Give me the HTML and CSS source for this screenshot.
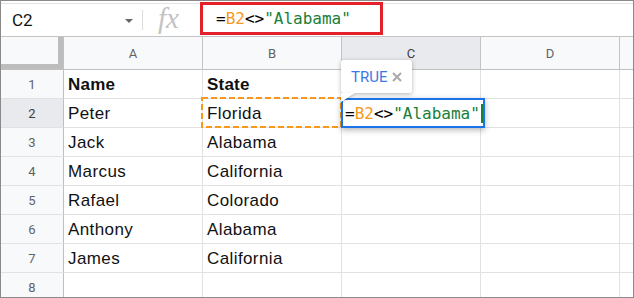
FILE: index.html
```html
<!DOCTYPE html>
<html lang="en">
<head>
    <meta charset="UTF-8">
    <title>Sheet - not equal formula</title>
    <link rel="stylesheet" href="styles.css">
</head>
<body>
    <div class="sheet">
        <div class="formula-bar">
            <div class="name-box">
                <span>C2</span>
                <span class="caret"></span>
            </div>
            <div class="divider"></div>
            <div class="fx">fx</div>
            <div class="formula-input">
                <span class="op">=</span><span class="ref">B2</span><span class="op">&lt;&gt;</span><span class="str">"Alabama"</span>
            </div>
        </div>

        <div class="grid">
            <div class="cell corner"></div>
            <div class="cell col-head">A</div>
            <div class="cell col-head">B</div>
            <div class="cell col-head active">C</div>
            <div class="cell col-head">D</div>
            <div class="cell col-head last"></div>

            <div class="cell row-head">1</div>
            <div class="cell bold">Name</div>
            <div class="cell bold">State</div>
            <div class="cell"></div>
            <div class="cell"></div>
            <div class="cell last"></div>

            <div class="cell row-head active">2</div>
            <div class="cell">Peter</div>
            <div class="cell copy-ref">
                Florida
                <svg class="dash-box" width="141" height="31">
                    <rect x="1" y="1" width="139" height="29" fill="none" stroke="#f7981d" stroke-width="2" stroke-dasharray="6 3"/>
                </svg>
            </div>
            <div class="cell editing">
                <div class="result-tip">
                    <span class="tip-value">TRUE</span>
                    <svg class="tip-close" width="10" height="10" viewBox="0 0 10 10">
                        <path d="M1 1 L9 9 M9 1 L1 9" stroke="#a9a9a9" stroke-width="2"/>
                    </svg>
                </div>
                <div class="cell-editor">
                    <span class="op">=</span><span class="ref">B2</span><span class="op">&lt;&gt;</span><span class="str">"Alabama"</span><span class="cursor"></span>
                </div>
            </div>
            <div class="cell"></div>
            <div class="cell last"></div>

            <div class="cell row-head">3</div>
            <div class="cell">Jack</div>
            <div class="cell">Alabama</div>
            <div class="cell"></div>
            <div class="cell"></div>
            <div class="cell last"></div>

            <div class="cell row-head">4</div>
            <div class="cell">Marcus</div>
            <div class="cell">California</div>
            <div class="cell"></div>
            <div class="cell"></div>
            <div class="cell last"></div>

            <div class="cell row-head">5</div>
            <div class="cell">Rafael</div>
            <div class="cell">Colorado</div>
            <div class="cell"></div>
            <div class="cell"></div>
            <div class="cell last"></div>

            <div class="cell row-head">6</div>
            <div class="cell">Anthony</div>
            <div class="cell">Alabama</div>
            <div class="cell"></div>
            <div class="cell"></div>
            <div class="cell last"></div>

            <div class="cell row-head">7</div>
            <div class="cell">James</div>
            <div class="cell">California</div>
            <div class="cell"></div>
            <div class="cell"></div>
            <div class="cell last"></div>

            <div class="cell row-head">8</div>
            <div class="cell"></div>
            <div class="cell"></div>
            <div class="cell"></div>
            <div class="cell"></div>
            <div class="cell last"></div>
        </div>
    </div>
</body>
</html>
```

FILE: styles.css
```css
body {
    margin: 0;
    background: #fff;
}

.sheet {
    width: 634px;
    height: 298px;
    box-sizing: border-box;
    border: 1px solid #8a8a8a;
    overflow: hidden;
    background: #fff;
    font-family: 'Liberation Sans', Arial, sans-serif;
}

/* formula bar */

.formula-bar {
    display: flex;
    align-items: center;
    height: 34px;
    margin-top: 2px;
    box-sizing: border-box;
    border-top: 1px solid #e3e3e3;
    border-bottom: 1px solid #c4c4c4;
}

.name-box {
    width: 140px;
    box-sizing: border-box;
    padding: 0 8px 0 11px;
    display: flex;
    align-items: center;
    justify-content: space-between;
    font-family: Roboto, sans-serif;
    font-size: 17px;
    color: #111;
}

.caret {
    width: 0;
    height: 0;
    border-left: 4px solid transparent;
    border-right: 4px solid transparent;
    border-top: 4px solid #666;
    margin-top: 2px;
}

.divider {
    width: 1px;
    height: 20px;
    margin-left: 1px;
    background: #dadce0;
}

.fx {
    width: 28px;
    margin-left: 15px;
    font-family: 'Liberation Serif', serif;
    font-style: italic;
    font-size: 29px;
    color: #c3c3c3;
    line-height: 1;
    margin-top: -4px;
}

.formula-input {
    align-self: flex-start;
    margin-top: -2px;
    margin-left: 14px;
    height: 33px;
    box-sizing: border-box;
    border: 3px solid #e3212b;
    padding: 0 29px 0 13px;
    display: flex;
    align-items: center;
    font-family: 'DejaVu Sans Mono', 'Liberation Mono', monospace;
    font-size: 16px;
    white-space: pre;
}

.op { color: #000; }
.ref { color: #f7981d; }
.str { color: #188038; }

/* grid */

.grid {
    display: grid;
    grid-template-columns: 63px 139px 139px 139px 139px 1fr;
    grid-template-rows: 33px repeat(8, 29px);
}

.cell {
    position: relative;
    box-sizing: border-box;
    border-right: 1px solid #e2e2e3;
    border-bottom: 1px solid #e2e2e3;
    padding: 2px 0 0 4px;
    display: flex;
    align-items: center;
    font-size: 17px;
    letter-spacing: 0.4px;
    color: #111;
    white-space: nowrap;
}

.cell.last {
    border-right: none;
}

.cell.bold {
    font-weight: bold;
    letter-spacing: 0.2px;
}

.col-head,
.row-head {
    justify-content: center;
    padding: 0;
    background: #f8f9fa;
    font-family: Roboto, sans-serif;
    font-size: 13px;
    letter-spacing: 0;
    color: #5f6368;
}

.col-head {
    border-right-color: #c4c4c4;
    border-bottom-color: #c0c0c0;
}

.row-head {
    border-right-color: #c0c0c0;
    padding-top: 1px;
}

.col-head.active,
.row-head.active {
    background: #e8eaed;
    color: #3c4043;
}

.corner {
    background: #f8f9fa;
    border-right-color: #c0c0c0;
    border-bottom-color: #c0c0c0;
    box-shadow: inset -5px 0 0 #bdbdbd, inset 0 -5px 0 #bdbdbd;
}

/* copy reference and editor */

.dash-box {
    position: absolute;
    left: -2px;
    top: -2px;
}

.cell-editor {
    position: absolute;
    left: -1px;
    top: -1px;
    width: 144px;
    height: 30px;
    box-sizing: border-box;
    border: 2px solid #1a73e8;
    background: #fff;
    box-shadow: 0 2px 6px rgba(0, 0, 0, 0.3);
    padding-left: 2px;
    display: flex;
    align-items: center;
    font-family: 'DejaVu Sans Mono', 'Liberation Mono', monospace;
    font-size: 16px;
    letter-spacing: 0;
    white-space: pre;
    z-index: 2;
}

.cursor {
    width: 2px;
    height: 19px;
    margin-left: 1px;
    background: #188038;
}

.result-tip {
    position: absolute;
    left: -1px;
    top: -39px;
    width: 71px;
    height: 33px;
    box-sizing: border-box;
    padding: 0 10px;
    display: flex;
    align-items: center;
    justify-content: space-between;
    background: #fff;
    border-radius: 2px;
    box-shadow: 0 1px 4px rgba(0, 0, 0, 0.3);
    z-index: 3;
}

.result-tip::after {
    content: '';
    position: absolute;
    left: 0;
    bottom: -9px;
    width: 0;
    height: 0;
    border-left: 14px solid #fff;
    border-bottom: 9px solid transparent;
    filter: drop-shadow(0 1px 1px rgba(0, 0, 0, 0.25));
}

.tip-value {
    font-family: Roboto, sans-serif;
    font-size: 15px;
    letter-spacing: 0;
    color: #3b78e7;
}

.tip-close {
    margin-top: 1px;
}
```
